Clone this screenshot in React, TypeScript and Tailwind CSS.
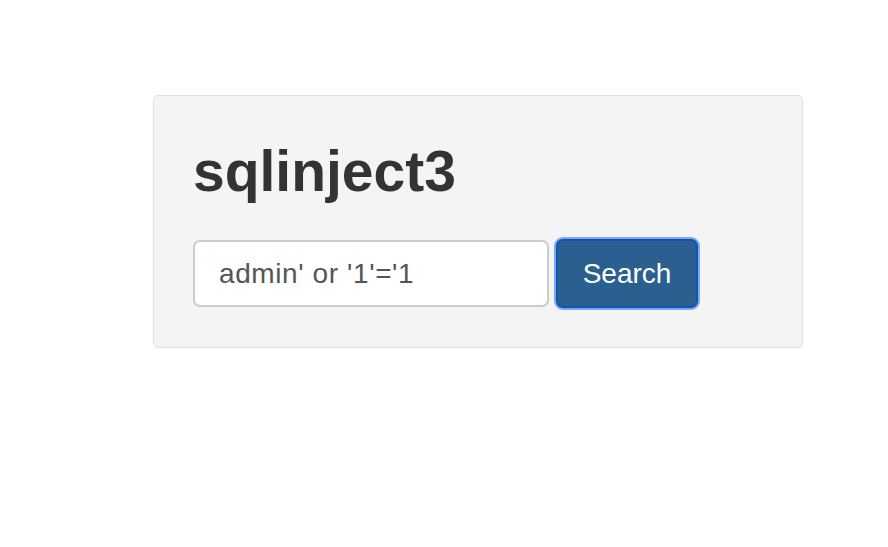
export default function App() {
  return (
    <div className="min-h-screen bg-white pt-[95px] pl-[153px] font-['Liberation_Sans',Arial,sans-serif]">
      <div className="w-[650px] h-[253px] rounded-[5px] border border-[#e1e1e1] bg-[#f4f4f4] pl-[39px] pt-[44px]">
        <h1 className="text-[57px] leading-[63px] font-bold text-[#333333]">sqlinject3</h1>
        <div className="mt-[36px] flex items-center gap-[7px]">
          <input
            type="text"
            defaultValue="admin' or '1'='1"
            className="w-[356px] h-[67px] rounded-[7px] border-2 border-[#cccccc] bg-white px-[24px] text-[28px] tracking-[0.6px] text-[#555555] outline-none"
          />
          <button className="w-[142px] h-[69px] rounded-[7px] border-2 border-[#1453b4] bg-[#2a5f8f] text-[28px] text-white shadow-[0_0_0_2px_#78aaee]">
            Search
          </button>
        </div>
      </div>
    </div>
  );
}
